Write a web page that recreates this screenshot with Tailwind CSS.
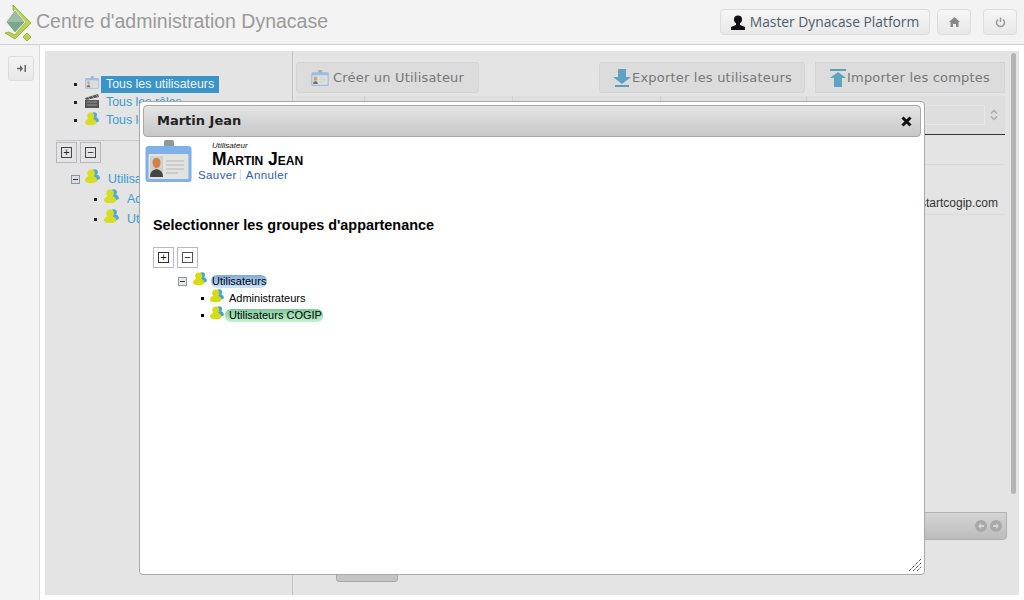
<!DOCTYPE html>
<html lang="fr">

<head>
    <meta charset="UTF-8">
    <title>Centre d'administration Dynacase</title>
    <script src="https://cdn.jsdelivr.net/npm/@tailwindcss/browser@4"></script>
</head>

<body class="relative w-[1024px] h-[600px] overflow-hidden bg-white font-['Liberation_Sans',Arial,sans-serif]">
    <svg class="hidden" aria-hidden="true">
        <symbol id="users" viewBox="0 0 16 16">
            <circle cx="10.500" cy="3.500" r="3.200" fill="#3fa4dc" />
            <path d="M8 6h5q3 1 3 4.500L13 12H8z" fill="#3fa4dc" />
            <circle cx="6.500" cy="4.500" r="4" fill="#d6dc10" />
            <path d="M4.500 7.500h4Q13 9 13 12q0 3-6.500 3T0 12q0-3 4.500-4.500z" fill="#d6dc10" />
        </symbol>
        <symbol id="badge" viewBox="0 0 47 42">
            <rect x="19" y="0" width="10" height="11" rx="1.500" fill="#8d9a9c" />
            <rect x="0.500" y="6" width="46" height="36" rx="3" fill="#7fb0ea" />
            <rect x="3.500" y="14" width="40" height="25" rx="1" fill="#e2e2de" />
            <rect x="5" y="16" width="13" height="21" fill="#d0d0cc" />
            <path d="M11.500 18c3 0 4 2 4 5s-2 5-4 5-4-2-4-5 1-5 4-5z" fill="#d0814c" />
            <path d="M5 37q0-7 6.500-8Q18 30 18 37z" fill="#444" />
            <path d="M21 21h18M21 25h18M21 29h18M21 33h12" stroke="#b5b5b5" />
        </symbol>
    </svg>

    <!-- Header -->
    <header class="h-[45px] bg-[#f3f3f3] border-b border-[#cfcfcf] flex items-center pl-[4px] pr-[7px]">
        <svg width="29" height="40" viewBox="0 0 29 40" class="mr-[3px]" aria-hidden="true">
            <path d="M9 3l18 18-16 16-10-6 4-1 6 3 10-12.500L9 8z" fill="#b9d34e" stroke="#8aa62e" stroke-width="0.800" />
            <path d="M11 8l10 12-10 11-9-11z" fill="#7ba68c" stroke="#eef3e6" />
            <path d="M11 9l9 11H3z" fill="#9cbcaa" />
            <path d="M23 31l4 4-4 4-4-4z" fill="#b9d34e" stroke="#8aa62e" stroke-width="0.800" />
        </svg>
        <h1 class="text-[19.500px] text-[#9a9a9a]">Centre d'administration Dynacase</h1>
        <div class="ml-auto flex items-center font-['Open_Sans',sans-serif]">
            <button class="h-[26px] w-[210px] flex items-center justify-center gap-[5px] rounded-[4px] border border-[#dcdcdc] bg-gradient-to-b from-[#f6f6f6] to-[#e8e8e8] text-[13.800px] text-[#4d5d6e]">
                <svg width="14" height="15" viewBox="0 0 14 15" aria-hidden="true">
                    <circle cx="7" cy="4.500" r="4" fill="#111" />
                    <path d="M5 8h4v2l5 2v3H0v-3l5-2z" fill="#111" />
                </svg>
                Master Dynacase Platform
            </button>
            <button class="h-[26px] w-[34px] ml-[7px] flex items-center justify-center rounded-[4px] border border-[#dcdcdc] bg-gradient-to-b from-[#f6f6f6] to-[#e8e8e8]" aria-label="Accueil">
                <svg width="11" height="10" viewBox="0 0 11 10" aria-hidden="true">
                    <path d="M5.500 0L11 5H9.500v5H7V7H4v3H1.500V5H0z" fill="#888" />
                </svg>
            </button>
            <button class="h-[26px] w-[34px] ml-[12px] flex items-center justify-center rounded-[4px] border border-[#dcdcdc] bg-gradient-to-b from-[#f6f6f6] to-[#e8e8e8]" aria-label="Quitter">
                <svg width="11" height="11" viewBox="0 0 11 11" fill="none" stroke="#999" stroke-width="1.500" aria-hidden="true">
                    <path d="M3 2.500a4 4 0 1 0 5 0M5.500 0.500v4.500" />
                </svg>
            </button>
        </div>
    </header>

    <div class="flex h-[555px]">
        <!-- Sidebar -->
        <aside class="w-[40px] h-full bg-[#f3f3f3] border-r border-[#dadada] shrink-0 pt-[11px] pl-[8px]">
            <button class="w-[26px] h-[25px] flex items-center justify-center rounded-[3px] border border-[#dcdcdc] bg-gradient-to-b from-[#f4f4f4] to-[#e8e8e8]" aria-label="Ouvrir">
                <svg width="9" height="7" viewBox="0 0 9 7" fill="#666" aria-hidden="true">
                    <path d="M0 2.700h3V0l3 3.500L3 7V4.300H0zM7.500 0H9v7H7.500z" />
                </svg>
            </button>
        </aside>

        <!-- Main panel, dimmed behind the dialog -->
        <main class="ml-[5px] mt-[6px] w-[974px] h-[544px] bg-[#e4e4e4] flex relative">
            <section class="w-[248px] shrink-0 border-r border-[#c4c4c4] pt-[24px] text-[12.400px] text-[#3a9bd0]">
                <ul class="pl-[29px]">
                    <li class="h-[18px] flex items-center">
                        <span class="w-[3px] h-[3px] bg-[#222] mr-[8px]"></span>
                        <svg width="14" height="13" class="mr-[2px] opacity-70 mt-[-3px]" aria-hidden="true"><use href="#badge" /></svg>
                        <span class="bg-[#3a94c6] text-[#eef5fa] px-[5px] h-[17px] leading-[17px] w-[118px] whitespace-nowrap">Tous les utilisateurs</span>
                    </li>
                    <li class="h-[18px] flex items-center">
                        <span class="w-[3px] h-[3px] bg-[#222] mr-[8px]"></span>
                        <svg width="14" height="14" viewBox="0 0 14 14" class="mr-[7px] mt-[-3px]" aria-hidden="true">
                            <path d="M0 4l13-4 1 3-13 3zM0 6h14v8H0z" fill="#555" />
                            <path d="M3 3l2 2M7 2l2 2M11 1l2 2M2 8h10M2 11h10" stroke="#999" />
                        </svg>
                        <span>Tous les rôles</span>
                    </li>
                    <li class="h-[18px] flex items-center">
                        <span class="w-[3px] h-[3px] bg-[#222] mr-[8px]"></span>
                        <svg width="14" height="14" class="mr-[7px] mt-[-3px] opacity-90" aria-hidden="true"><use href="#users" /></svg>
                        <span>Tous les groupes</span>
                    </li>
                </ul>
                <div class="mt-[11px] ml-[11px] border-t border-[#c4c4c4] pt-[1px] flex gap-[3px]">
                    <span class="w-[21px] h-[21px] border border-[#b8b8c4] flex items-center justify-center">
                        <span class="w-[11px] h-[11px] border border-[#444] flex items-center justify-center text-[#222] text-[11px] leading-none">+</span>
                    </span>
                    <span class="w-[21px] h-[21px] border border-[#b8b8c4] flex items-center justify-center">
                        <span class="w-[11px] h-[11px] border border-[#444] flex items-center justify-center text-[#222] text-[11px] leading-none">−</span>
                    </span>
                </div>
                <div class="ml-[26px] mt-[6px]">
                    <div class="h-[20px] flex items-center">
                        <span class="w-[9px] h-[9px] border border-[#8898a4] bg-[#ddd] flex items-center justify-center mr-[5px]"><span class="w-[5px] h-[1px] bg-[#333]"></span></span>
                        <svg width="15" height="15" class="mr-[8px] mt-[-5px] opacity-90" aria-hidden="true"><use href="#users" /></svg>
                        <span>Utilisateurs</span>
                    </div>
                    <div class="h-[20px] flex items-center ml-[23px]">
                        <span class="w-[3px] h-[3px] bg-[#222] mr-[7px]"></span>
                        <svg width="15" height="15" class="mr-[8px] mt-[-5px] opacity-90" aria-hidden="true"><use href="#users" /></svg>
                        <span>Administrateurs</span>
                    </div>
                    <div class="h-[20px] flex items-center ml-[23px]">
                        <span class="w-[3px] h-[3px] bg-[#222] mr-[7px]"></span>
                        <svg width="15" height="15" class="mr-[8px] mt-[-5px] opacity-90" aria-hidden="true"><use href="#users" /></svg>
                        <span>Utilisateurs COGIP</span>
                    </div>
                </div>
            </section>

            <section class="flex-1 min-w-0 pl-[3px] pr-[14px] pt-[11px] flex flex-col relative">
                <div class="flex h-[31px] font-['DejaVu_Sans',sans-serif] text-[13px] tracking-[0.2px] text-[#777]">
                    <button class="w-[183px] h-full rounded-[3px] border border-[#d4d4d4] bg-[#dcdcdc] flex items-center pl-[13px] gap-[3px]">
                        <svg width="20" height="16" class="opacity-70" aria-hidden="true"><use href="#badge" /></svg>
                        Créer un Utilisateur
                    </button>
                    <button class="ml-auto w-[206px] h-full rounded-[3px] border border-[#d4d4d4] bg-[#dcdcdc] flex items-center pl-[12px]">
                        <svg width="20" height="18" viewBox="0 0 20 18" aria-hidden="true">
                            <path d="M6 0h8v8h5l-9 7-9-7h5z" fill="#5fa3c4" />
                            <path d="M3 16h14v2H3z" fill="#5f9fb4" />
                        </svg>
                        Exporter les utilisateurs
                    </button>
                    <button class="ml-[10px] w-[190px] h-full border border-[#d4d4d4] bg-[#dcdcdc] flex items-center pl-[13px]">
                        <svg width="18" height="18" viewBox="0 0 18 18" aria-hidden="true">
                            <path d="M1 0h16v2H1z" fill="#5f9fb4" />
                            <path d="M9 3l8 6h-4v9H5V9H1z" fill="#5fa3c4" />
                        </svg>
                        Importer les comptes
                    </button>
                </div>
                <div class="mt-[3px] h-[39px] border-b border-[#333] grid grid-cols-[69px_148px_148px_146px_1fr] bg-[#dedede]">
                    <span class="border-r border-[#cfcfcf]"></span>
                    <span class="border-r border-[#cfcfcf]"></span>
                    <span class="border-r border-[#cfcfcf]"></span>
                    <span class="border-r border-[#cfcfcf]"></span>
                    <span class="flex items-center justify-end pr-[7px]">
                        <span class="w-[60px] h-[20px] border border-[#e8e8e8] mr-[5px]"></span>
                        <svg width="8" height="12" viewBox="0 0 8 12" fill="none" stroke="#aaa" stroke-width="1.500" aria-hidden="true">
                            <path d="M1 4.500l3-3 3 3M1 7.500l3 3 3-3" />
                        </svg>
                    </span>
                </div>
                <div class="h-[30px] border-b border-[#dadada]"></div>
                <div class="h-[50px] border-b border-[#dadada] text-right pt-[30px] pr-[7px] text-[12px] leading-[16px] text-[#333]">jean.martin@startcogip.com</div>
                <div class="mt-[297px] mr-[-2px] h-[28px] rounded-br-[4px] border border-[#b0b0b0] bg-gradient-to-b from-[#d4d4d4] to-[#bcbcbc] flex items-center justify-end pr-[4px] gap-[3px]">
                    <svg width="12" height="12" viewBox="0 0 12 12" aria-hidden="true">
                        <circle cx="6" cy="6" r="6" fill="#a9a9a9" />
                        <path d="M9 5h-3V3L3 6l3 3V7h3z" fill="#d4d4d4" />
                    </svg>
                    <svg width="12" height="12" viewBox="0 0 12 12" aria-hidden="true">
                        <circle cx="6" cy="6" r="6" fill="#a9a9a9" />
                        <path d="M3 5h3V3l3 3-3 3V7H3z" fill="#d4d4d4" />
                    </svg>
                </div>
                <div class="mt-[34px] ml-[40px] w-[62px] h-[8px] bg-[#c4c4c4] border border-[#a8a8a8] rounded-b-[3px]"></div>
                <div class="absolute right-[3px] top-[2px] w-[5px] h-[441px] rounded-full bg-[#b4b4b4]"></div>
            </section>
        </main>
    </div>

    <!-- Dialog -->
    <div class="absolute left-[139px] top-[101px] w-[786px] h-[474px] bg-white rounded-[4px] border border-[#a8a8a8] p-[3px] flex flex-col" role="dialog">
        <div class="h-[32px] shrink-0 rounded-[4px] border border-[#a8a8a8] bg-gradient-to-b from-[#e4e4e4] to-[#c8c8c8] flex items-center justify-between pl-[13px] pr-[8px] font-['DejaVu_Sans',sans-serif] font-bold text-[13px] text-[#222]">
            <span>Martin Jean</span>
            <svg width="11" height="11" viewBox="0 0 11 11" stroke="#111" stroke-width="3" aria-hidden="true">
                <path d="M1.500 1.500l8 8M9.500 1.500l-8 8" />
            </svg>
        </div>
        <div class="flex pl-[2px] pt-[3px] h-[42px] shrink-0">
            <svg width="47" height="42" class="shrink-0" aria-hidden="true"><use href="#badge" /></svg>
            <div class="ml-[6px]">
                <p class="ml-[14px] mt-[2px] text-[8px] leading-[8px] italic text-[#111]">Utilisateur</p>
                <p class="ml-[14px] text-[17.500px] leading-[18px] font-bold [font-variant:small-caps] text-black">Martin Jean</p>
                <p class="text-[11.500px] leading-[14px] tracking-[0.4px] text-[#2f5da8]">
                    <span class="pr-[3px] border-r border-[#cfe0f0]">Sauver</span><span class="pl-[5px]">Annuler</span>
                </p>
            </div>
        </div>
        <h2 class="ml-[10px] mt-[38px] text-[14.400px] leading-[16px] font-bold text-black">Selectionner les groupes d'appartenance</h2>
        <div class="ml-[10px] mt-[14px] flex gap-[3px]">
            <span class="w-[21px] h-[21px] border border-[#b8b8c8] flex items-center justify-center">
                <span class="w-[11px] h-[11px] border border-[#333] flex items-center justify-center text-[#111] text-[11px] leading-none">+</span>
            </span>
            <span class="w-[21px] h-[21px] border border-[#b8b8c8] flex items-center justify-center">
                <span class="w-[11px] h-[11px] border border-[#555] flex items-center justify-center text-[#111] text-[11px] leading-none">−</span>
            </span>
        </div>
        <div class="ml-[35px] mt-[5px] text-[11px] text-black">
            <div class="h-[17px] flex items-center">
                <span class="w-[9px] h-[9px] border border-[#8898a4] bg-[#e8e8e8] flex items-center justify-center mr-[6px]"><span class="w-[5px] h-[1px] bg-[#333]"></span></span>
                <svg width="14" height="14" class="mr-[4px] mt-[-5px]" aria-hidden="true"><use href="#users" /></svg>
                <span class="rounded-[6px] px-[1px] leading-[13px] bg-gradient-to-b from-[#7fa9dc] to-[#cfe6fa]">Utilisateurs</span>
            </div>
            <div class="h-[17px] flex items-center ml-[23px]">
                <span class="w-[3px] h-[3px] bg-black mr-[6px]"></span>
                <svg width="14" height="14" class="mr-[5px] mt-[-5px]" aria-hidden="true"><use href="#users" /></svg>
                <span>Administrateurs</span>
            </div>
            <div class="h-[17px] flex items-center ml-[23px]">
                <span class="w-[3px] h-[3px] bg-black mr-[6px]"></span>
                <svg width="14" height="14" class="mr-[1px] mt-[-5px]" aria-hidden="true"><use href="#users" /></svg>
                <span class="rounded-[6px] pl-[4px] pr-[1px] leading-[13px] bg-gradient-to-b from-[#7fc89a] to-[#c0f4cc]">Utilisateurs COGIP</span>
            </div>
        </div>
        <svg width="12" height="12" viewBox="0 0 12 12" stroke="#000" class="absolute right-[3px] bottom-[3px]" stroke-dasharray="1 1" aria-hidden="true">
            <path d="M0 12L12 0M4 12l8-8M8 12l4-4" />
        </svg>
    </div>
</body>

</html>
